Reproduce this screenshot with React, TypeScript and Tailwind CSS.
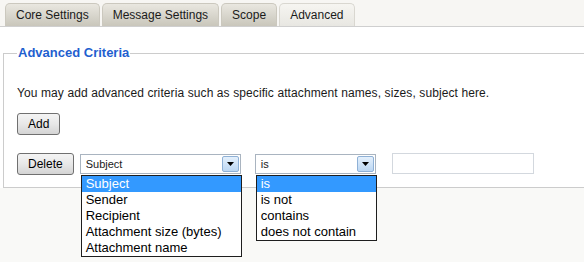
const tabs = ["Core Settings", "Message Settings", "Scope", "Advanced"];

const fieldOptions = [
  "Subject",
  "Sender",
  "Recipient",
  "Attachment size (bytes)",
  "Attachment name",
];

const opOptions = ["is", "is not", "contains", "does not contain"];

function Arrow() {
  return (
    <div className="flex h-full w-[17px] items-center justify-center rounded-[2px] border border-[#8fb1d6] bg-gradient-to-b from-[#e4f0fc] to-[#bcd7f3]">
      <svg width="7" height="4" viewBox="0 0 7 4">
        <path d="M0 0h7L3.5 4z" fill="#000" />
      </svg>
    </div>
  );
}

function Select({
  value,
  width,
  options,
}: {
  value: string;
  width: string;
  options: string[];
}) {
  return (
    <div className={`relative ${width}`}>
      <div className="flex h-[20px] items-center justify-between border border-[#a9b4c0] bg-white pl-[5px] pr-[1px] py-[1px] text-[11px]">
        <span>{value}</span>
        <Arrow />
      </div>
      {/* open list lies over the fieldset edge */}
      <ul className="absolute left-[1px] top-[21px] z-10 w-full border border-[#1e1e1e] bg-white text-[13px] leading-[16px]">
        {options.map((opt, i) => (
          <li
            key={opt}
            className={`pl-[4px] ${i === 0 ? "bg-[#3399ff] text-white" : "text-black"}`}
          >
            {opt}
          </li>
        ))}
      </ul>
    </div>
  );
}

function Button({ label }: { label: string }) {
  return (
    <button className="h-[22px] rounded-[3px] border border-[#707070] bg-gradient-to-b from-[#f4f4f4] via-[#e8e8e8] to-[#d4d4d4] px-[10px] text-[12px] leading-[18px] text-black">
      {label}
    </button>
  );
}

export default function App() {
  return (
    <div className="flex h-[262px] w-[584px] flex-col overflow-hidden bg-[#f9f9f7] font-['Liberation_Sans',Arial,sans-serif] text-[#1a1a1a]">
      <div className="flex gap-[2px] border-b border-[#cfcfcf] bg-[#f7f6f3] pl-[5px] pt-[3px]">
        {tabs.map((t) => (
          <div
            key={t}
            className={`h-[23px] rounded-t-[5px] border border-b-0 px-[10px] text-[12px] leading-[22px] ${
              t === "Advanced"
                ? "border-[#d9d7d0] bg-gradient-to-b from-[#f6f5f1] to-[#e8e7e2]"
                : "border-[#cbc8be] bg-gradient-to-b from-[#e9e7e0] to-[#c9c6bb]"
            }`}
          >
            {t}
          </div>
        ))}
      </div>

      <div className="bg-white pl-[3px] pt-[18px]">
        <fieldset className="border-y border-l border-[#cccccc] pb-[12px] pl-[13px]">
          <legend className="px-px text-[13px] font-bold leading-[16px] text-[#1f5fcf]">
            Advanced Criteria
          </legend>
          <p className="mt-[25px] text-[12px] leading-[15px] tracking-[0.1px]">
            You may add advanced criteria such as specific attachment names, sizes, subject here.
          </p>
          <div className="mt-[10px]">
            <Button label="Add" />
          </div>
          <div className="mt-[18px] flex items-start">
            <Button label="Delete" />
            <div className="ml-[6px] pt-px">
              <Select value="Subject" width="w-[161px]" options={fieldOptions} />
            </div>
            <div className="ml-[14px] pt-px">
              <Select value="is" width="w-[121px]" options={opOptions} />
            </div>
            <div className="ml-[16px] h-[21px] w-[142px] border border-[#d3d8de] bg-white" />
          </div>
        </fieldset>
      </div>
    </div>
  );
}
